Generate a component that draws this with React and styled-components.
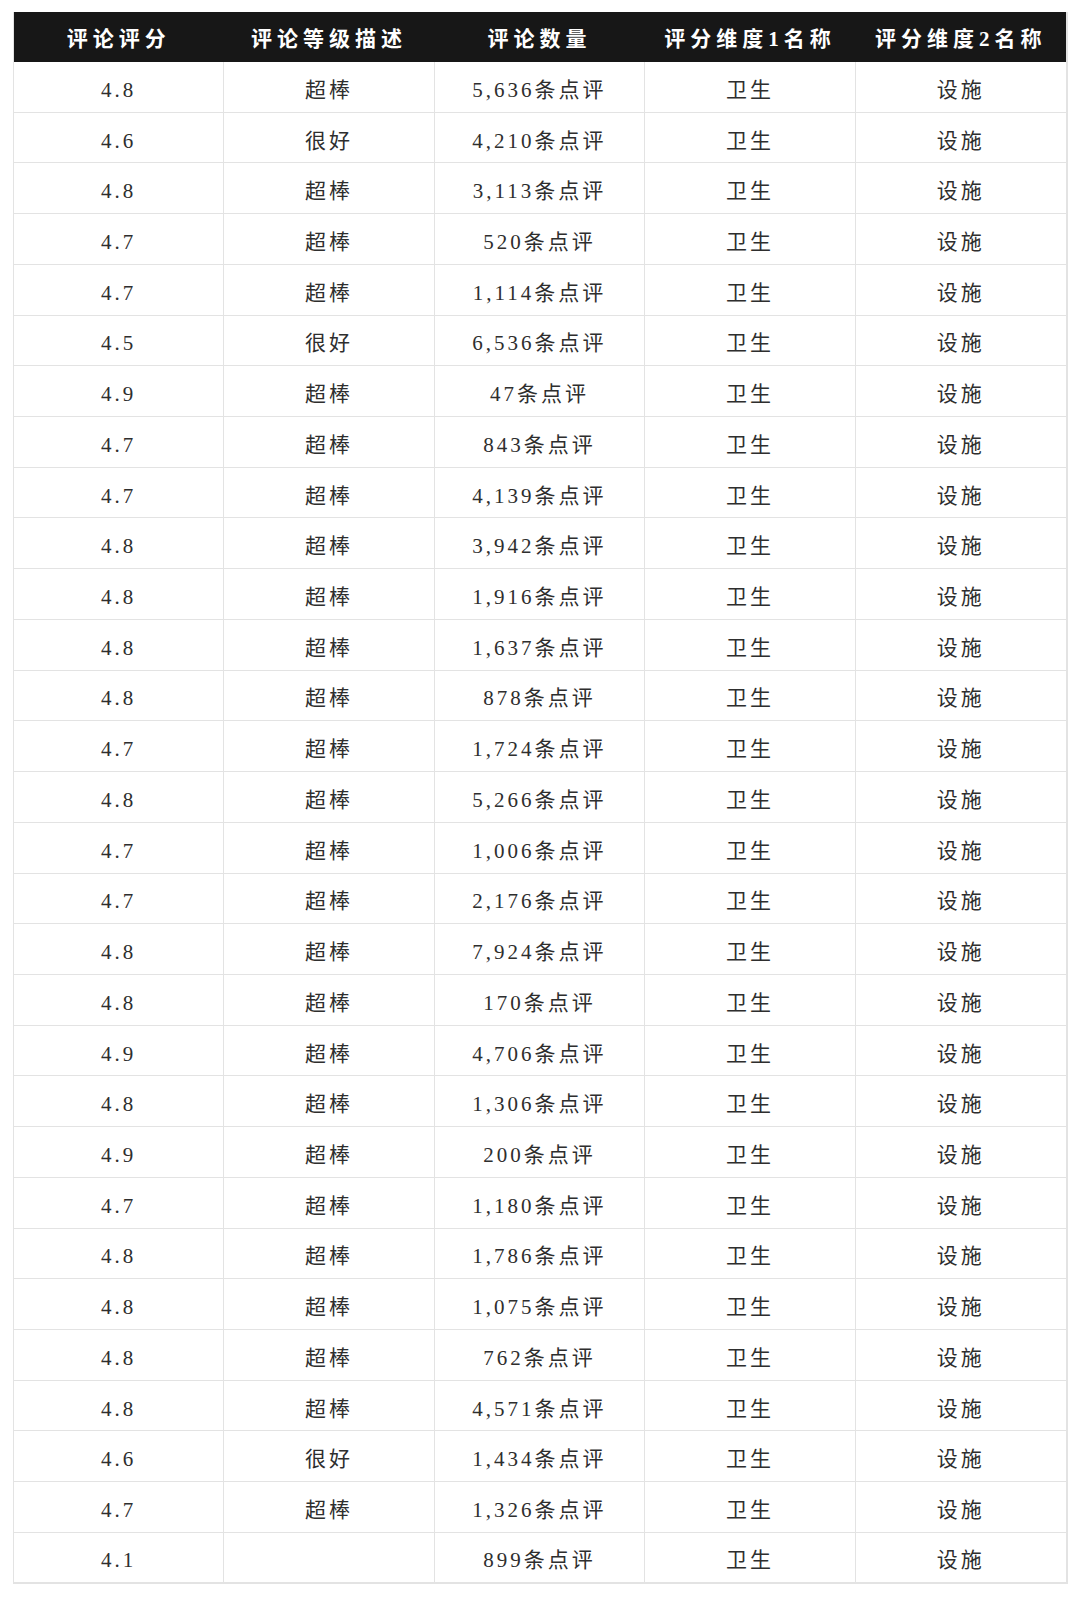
import React from "react";
import styled, { createGlobalStyle } from "styled-components";

const GlobalStyle = createGlobalStyle`
    html, body {
        margin: 0;
        padding: 0;
        background: #ffffff;
    }
    body {
        font-family: "Liberation Serif", "Noto Sans CJK SC", serif;
    }
`;

const Page = styled.div`
    padding: 12px 13px 13px 13px;
`;

const Table = styled.div`
    width: 1055px;
    border-left: 1px solid #e3e3e3;
    border-right: 2px solid #e3e3e3;
    box-sizing: border-box;
`;

const Row = styled.div`
    display: grid;
    grid-template-columns: repeat(5, 1fr);
    height: ${p => (p.$head ? "50px" : "50.73px")};
    box-sizing: border-box;
    background: ${p => (p.$head ? "#171717" : "#ffffff")};
    border-bottom: ${p => (p.$last ? "2px" : "1px")} solid ${p => (p.$head ? "#171717" : "#e3e3e3")};
`;

const Cell = styled.div`
    display: flex;
    align-items: center;
    justify-content: center;
    box-sizing: border-box;
    padding-top: ${p => (p.$head ? "4px" : "6px")};
    border-right: 1px solid ${p => (p.$head ? "#171717" : "#e3e3e3")};
    &:last-child {
        border-right: none;
    }
    font-family: "Liberation Serif", "Noto Sans CJK SC", serif;
    font-size: 21px;
    line-height: 24px;
    font-weight: ${p => (p.$head ? 700 : 400)};
    letter-spacing: ${p => (p.$head ? "5px" : "3px")};
    color: ${p => (p.$head ? "#ffffff" : "#2e2e2e")};
    white-space: nowrap;
`;

const headers = ["评论评分", "评论等级描述", "评论数量", "评分维度1名称", "评分维度2名称"];

const rows = [
    ["4.8", "超棒", "5,636"],
    ["4.6", "很好", "4,210"],
    ["4.8", "超棒", "3,113"],
    ["4.7", "超棒", "520"],
    ["4.7", "超棒", "1,114"],
    ["4.5", "很好", "6,536"],
    ["4.9", "超棒", "47"],
    ["4.7", "超棒", "843"],
    ["4.7", "超棒", "4,139"],
    ["4.8", "超棒", "3,942"],
    ["4.8", "超棒", "1,916"],
    ["4.8", "超棒", "1,637"],
    ["4.8", "超棒", "878"],
    ["4.7", "超棒", "1,724"],
    ["4.8", "超棒", "5,266"],
    ["4.7", "超棒", "1,006"],
    ["4.7", "超棒", "2,176"],
    ["4.8", "超棒", "7,924"],
    ["4.8", "超棒", "170"],
    ["4.9", "超棒", "4,706"],
    ["4.8", "超棒", "1,306"],
    ["4.9", "超棒", "200"],
    ["4.7", "超棒", "1,180"],
    ["4.8", "超棒", "1,786"],
    ["4.8", "超棒", "1,075"],
    ["4.8", "超棒", "762"],
    ["4.8", "超棒", "4,571"],
    ["4.6", "很好", "1,434"],
    ["4.7", "超棒", "1,326"],
    ["4.1", "", "899"]
];

export default function App() {
    return (
        <Page>
            <GlobalStyle />
            <Table>
                <Row $head>
                    {headers.map(h => (
                        <Cell $head key={h}>{h}</Cell>
                    ))}
                </Row>
                {rows.map((r, i) => (
                    <Row key={i} $last={i === rows.length - 1}>
                        <Cell>{r[0]}</Cell>
                        <Cell>{r[1]}</Cell>
                        <Cell>{r[2]}条点评</Cell>
                        <Cell>卫生</Cell>
                        <Cell>设施</Cell>
                    </Row>
                ))}
            </Table>
        </Page>
    );
}
